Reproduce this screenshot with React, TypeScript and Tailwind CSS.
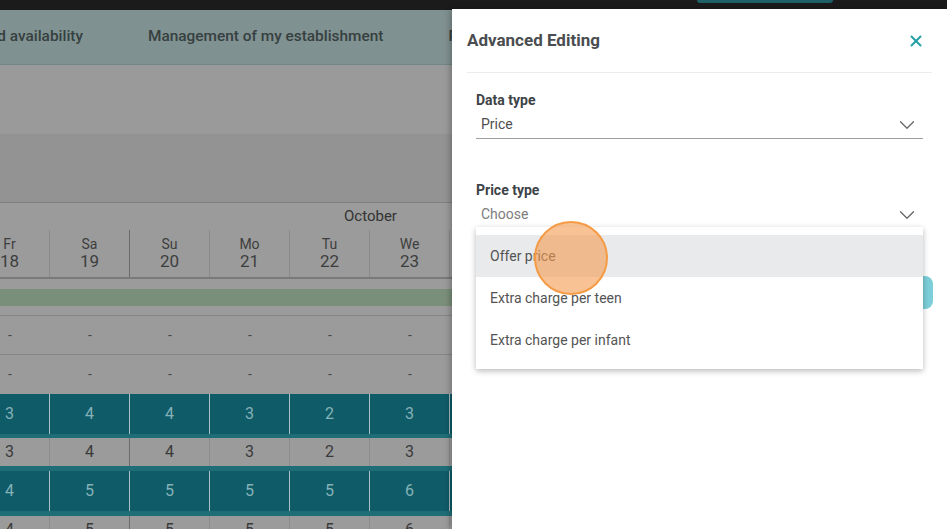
import { X, ChevronDown } from 'lucide-react';

const DAYS = [
  { d: 'Fr', n: 18 },
  { d: 'Sa', n: 19 },
  { d: 'Su', n: 20 },
  { d: 'Mo', n: 21 },
  { d: 'Tu', n: 22 },
  { d: 'We', n: 23 },
  { d: 'Th', n: 24 },
];

const ROWS = {
  first: [3, 4, 4, 3, 2, 3, 3],
  second: [4, 5, 5, 5, 5, 6, 6],
};

const OPTIONS = ['Offer price', 'Extra charge per teen', 'Extra charge per infant'];

// column i has its right edge on the week separator when i === 1 (Sa | Su)
function lineFor(i: number, light: string, strong: string) {
  return i === 1 ? strong : light;
}

function NumberRow({ values, teal }: { values: (number | string)[]; teal?: boolean }) {
  return (
    <div className={teal ? 'flex h-[40px] bg-[#0f5b67]' : 'flex h-[28px] bg-[#9b9b9b]'}>
      {values.map((v, i) => (
        <div
          key={i}
          className={
            'flex w-[80px] shrink-0 items-center justify-center border-r text-[16px] ' +
            (teal
              ? 'border-[#a9bfc3] text-[#84b2b8]'
              : lineFor(i, 'border-[#8c8c8c]', 'border-[#6b6b6b]') + ' text-[#3a3a3a]')
          }
        >
          {v}
        </div>
      ))}
    </div>
  );
}

function DashRow({ last }: { last?: boolean }) {
  return (
    <div className={'flex h-[39px] bg-[#9b9b9b] ' + (last ? '' : 'border-b border-[#858585]')}>
      {DAYS.map((_, i) => (
        <div key={i} className="flex w-[80px] shrink-0 items-center justify-center text-[14px] text-[#4a4a4a]">
          -
        </div>
      ))}
    </div>
  );
}

function Background() {
  return (
    <div className="flex h-full flex-col">
      {/* top bar */}
      <div className="flex h-[10px] shrink-0 bg-[#1b1b1b]">
        <div className="ml-[697px] h-[3px] w-[136px] rounded-b-md bg-[#1f5f66]" />
      </div>

      {/* nav */}
      <div className="flex h-[55px] shrink-0 items-center gap-[65px] border-b border-[#738585] bg-[#809191] text-[15.4px] font-medium whitespace-nowrap text-[#364040]">
        <div className="flex w-[83px] justify-end overflow-hidden">
          <span>Rates and availability</span>
        </div>
        <span>Management of my establishment</span>
        <span>Promotions</span>
      </div>

      <div className="h-[69px] shrink-0 bg-[#9a9a9a]" />
      <div className="h-[69px] shrink-0 border-b border-[#7f7f7f] bg-[#939393]" />

      {/* calendar */}
      <div className="-ml-[30px] flex flex-col bg-[#9b9b9b]">
        <div className="flex h-[27px] items-center pl-[374px] text-[15px] text-[#333]">October</div>

        <div className="flex h-[49px] border-b-2 border-[#7a7a7a]">
          {DAYS.map((day, i) => (
            <div
              key={day.d}
              className={
                'flex w-[80px] shrink-0 flex-col items-center justify-center border-r leading-none text-[#3e3e3e] ' +
                lineFor(i, 'border-[#8a8a8a]', 'border-[#6a6a6a]')
              }
            >
              <span className="text-[14px]">{day.d}</span>
              <span className="mt-[2px] text-[17px]">{day.n}</span>
            </div>
          ))}
        </div>

        <div className="flex h-[37px] flex-col justify-center border-b border-[#858585]">
          <div className="h-[17px] bg-[#7a8f7a]" />
        </div>

        <DashRow />
        <DashRow last />

        <div className="border-b-4 border-[#1f6e77]">
          <NumberRow values={ROWS.first} teal />
        </div>
        <NumberRow values={ROWS.first} />
        <div className="border-y-[5px] border-[#1f6e77]">
          <NumberRow values={ROWS.second} teal />
        </div>
        <NumberRow values={ROWS.second} />
      </div>
    </div>
  );
}

function Field({ label, value, placeholder }: { label: string; value: string; placeholder?: boolean }) {
  return (
    <div className="flex flex-col">
      <div className="text-[14px] font-bold text-[#3e4347]">{label}</div>
      <div className="mt-[2px] flex h-[26px] items-center justify-between border-b border-[#9e9e9e] pb-[2px] pl-[5px] pr-[3px]">
        <span className={'text-[14px] ' + (placeholder ? 'text-[#7d7d7d]' : 'text-[#4f4f4f]')}>{value}</span>
        <ChevronDown size={26} strokeWidth={1.15} className="text-[#666]" />
      </div>
    </div>
  );
}

function EditPanel() {
  return (
    <div className="absolute top-[9px] bottom-0 left-[452px] right-0 flex flex-col bg-white shadow-[-2px_0_6px_rgba(0,0,0,0.25)]">
      <div className="mx-[15px] flex h-[64px] shrink-0 items-center justify-between border-b border-[#ececec]">
        <h2 className="text-[17px] font-bold text-[#4a4d50]">Advanced Editing</h2>
        <X size={18} strokeWidth={2.6} className="mr-[7px] text-[#23a0a6]" />
      </div>

      <div className="relative flex flex-col px-6 pt-[17px]">
        <Field label="Data type" value="Price" />
        <div className="mt-[41px]">
          <Field label="Price type" value="Choose" placeholder />
        </div>

        <div className="mt-[47px] -mr-[10px] flex justify-end">
          <div className="h-[33px] w-[180px] rounded-lg bg-[#7ccfd9]" />
        </div>

        {/* open dropdown */}
        <div className="absolute top-[154px] left-6 right-6 bg-white py-[8px] shadow-[0_2px_6px_rgba(0,0,0,0.28)]">
          {OPTIONS.map((opt, i) => (
            <div
              key={opt}
              className={
                'flex h-[42px] items-center px-[14px] text-[14px] text-[#545454] ' +
                (i === 0 ? 'bg-[#e8eaec]' : '')
              }
            >
              {opt}
            </div>
          ))}
        </div>
      </div>

      {/* touch indicator */}
      <div className="absolute top-[212px] left-[82px] h-[74px] w-[74px] rounded-full border-2 border-[#f59b45] bg-[#f49a4e]/60" />
    </div>
  );
}

export default function App() {
  return (
    <div className="relative h-[529px] w-[947px] overflow-hidden bg-[#9b9b9b] font-['Roboto',sans-serif]">
      <Background />
      <EditPanel />
    </div>
  );
}
